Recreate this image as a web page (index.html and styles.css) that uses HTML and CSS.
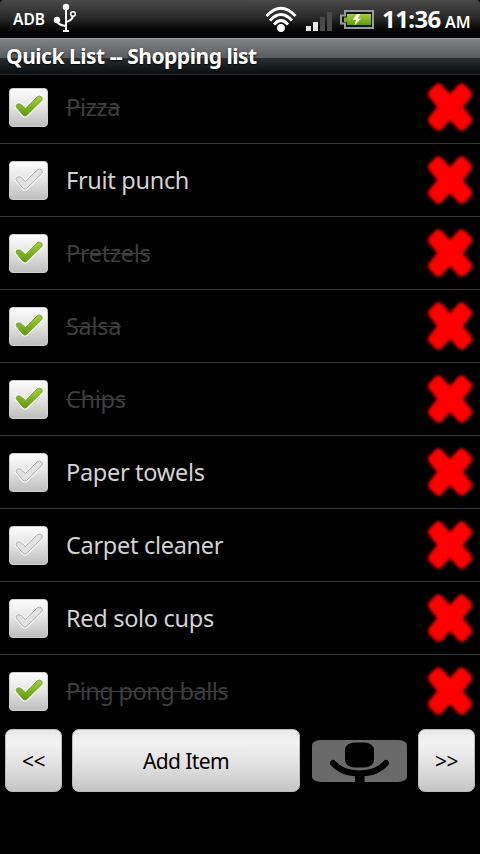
FILE: index.html
```html
<!DOCTYPE html>
<html lang="en">
  <head>
    <meta charset="UTF-8">
    <meta name="viewport" content="width=device-width, initial-scale=1">
    <title>Quick List</title>
    <link rel="stylesheet" href="styles.css">
  </head>
  <body>
    <!-- shared icons -->
    <svg class="defs" width="0" height="0">
      <defs>
        <linearGradient id="green" x1="0" y1="0" x2="0" y2="1">
          <stop offset="0" stop-color="#a3d138"/>
          <stop offset="1" stop-color="#5f9a0c"/>
        </linearGradient>
        <linearGradient id="box" x1="0" y1="0" x2="0" y2="1">
          <stop offset="0" stop-color="#fdfdfd"/>
          <stop offset="0.45" stop-color="#e6e6e6"/>
          <stop offset="1" stop-color="#bdbdbd"/>
        </linearGradient>
        <filter id="soft" filterUnits="userSpaceOnUse" x="0" y="0" width="54" height="58">
          <feGaussianBlur stdDeviation="1.5"/>
        </filter>
        <path id="tick" d="M7.600 17.300Q6.500 19.200 8.600 21.100L14.300 27.900Q16.200 29.800 18.300 28L33.500 13Q34.800 11.400 33.700 9.500Q31.500 7.300 29.200 8.800L16.700 21L12.100 16.700Q9.500 15.200 7.600 17.300Z"/>
      </defs>
      <symbol id="checked" viewBox="0 0 40 40">
        <rect x=".5" y=".5" width="39" height="39" rx="3.5" fill="url(#box)" stroke="#d2d2d2"/>
        <use href="#tick" fill="none" stroke="#f8f8f8" stroke-width="3"/>
        <use href="#tick" fill="url(#green)" stroke="#6e9f28" stroke-width=".8"/>
      </symbol>
      <symbol id="unchecked" viewBox="0 0 40 40">
        <rect x=".5" y=".5" width="39" height="39" rx="3.5" fill="url(#box)" stroke="#d2d2d2"/>
        <use href="#tick" fill="none" stroke="#f8f8f8" stroke-width="3"/>
        <use href="#tick" fill="#e2e2e2" stroke="#a8a8a8" stroke-width="1"/>
      </symbol>
      <symbol id="delete" viewBox="0 0 54 58">
        <path d="M13 6Q16 4 19 7L27 16L35 7Q38 4 41 6L48 13Q50 16 48 19L40 29L48 39Q50 42 48 45L41 52Q38 54 35 51L27 42L19 51Q16 54 13 52L6 45Q4 42 6 39L14 29L6 19Q4 16 6 13Z" fill="#f00" filter="url(#soft)"/>
      </symbol>
    </svg>

    <header class="status">
      <span class="adb">ADB</span>
      <svg class="usb" width="24" height="30" viewBox="0 0 24 30">
        <g fill="none" stroke="#fff" stroke-width="2">
          <path d="M13 4V27M4 17Q4 22 13 23M20 12Q20 17 13 19"/>
          <circle cx="20" cy="11" r="2.3" fill="#222" stroke-width="1.6"/>
          <path d="M10 28H16"/>
        </g>
        <circle cx="13" cy="4" r="3.2" fill="#fff"/>
        <circle cx="4" cy="17" r="3.2" fill="#fff"/>
      </svg>
      <svg class="wifi" width="32" height="27" viewBox="0 0 32 27">
        <g fill="none" stroke="#fff" stroke-width="2.8">
          <path d="M1.5 10Q16 -5.5 30.5 10"/>
          <path d="M5 14.5Q16 2.5 27 14.5"/>
          <path d="M9 18.5Q16 10.5 23 18.5"/>
        </g>
        <circle cx="16" cy="22" r="3.9" fill="#fff"/>
      </svg>
      <svg class="signal" width="27" height="20" viewBox="0 0 27 20">
        <path d="M0 14H5V19H0ZM7 10H12V19H7Z" fill="#e6e6e6"/>
        <path d="M14 5H19V19H14ZM21 0H26V19H21Z" fill="#4b4b4b"/>
      </svg>
      <svg class="battery" width="35" height="20" viewBox="0 0 35 20">
        <path d="M5 1H33V18H5V13.5H1V5.5H5Z" fill="#111" stroke="#9b9b9b" stroke-width="2"/>
        <path d="M7 4H31V15H7V12H4V7.5H7Z" fill="url(#green)"/>
        <path d="M17 4L12.5 10H16L14.5 15.5L21 8.5H17.5L20.5 4Z" fill="#fff"/>
      </svg>
      <span class="clock">11:36</span>
      <span class="ampm">AM</span>
    </header>

    <h1 class="title">Quick List -- Shopping list</h1>

    <main class="viewport">
      <ul class="items">
        <li class="done"><svg class="check"><use href="#checked"/></svg><span>Pizza</span><svg class="delete"><use href="#delete"/></svg></li>
        <li><svg class="check"><use href="#unchecked"/></svg><span>Fruit punch</span><svg class="delete"><use href="#delete"/></svg></li>
        <li class="done"><svg class="check"><use href="#checked"/></svg><span>Pretzels</span><svg class="delete"><use href="#delete"/></svg></li>
        <li class="done"><svg class="check"><use href="#checked"/></svg><span>Salsa</span><svg class="delete"><use href="#delete"/></svg></li>
        <li class="done"><svg class="check"><use href="#checked"/></svg><span>Chips</span><svg class="delete"><use href="#delete"/></svg></li>
        <li><svg class="check"><use href="#unchecked"/></svg><span>Paper towels</span><svg class="delete"><use href="#delete"/></svg></li>
        <li><svg class="check"><use href="#unchecked"/></svg><span>Carpet cleaner</span><svg class="delete"><use href="#delete"/></svg></li>
        <li><svg class="check"><use href="#unchecked"/></svg><span>Red solo cups</span><svg class="delete"><use href="#delete"/></svg></li>
        <li class="done long"><svg class="check"><use href="#checked"/></svg><span>Ping pong balls</span><svg class="delete"><use href="#delete"/></svg></li>
      </ul>
    </main>

    <footer class="toolbar">
      <button class="nav">&lt;&lt;</button>
      <button class="add">Add Item</button>
      <svg class="mic" width="98" height="44" viewBox="0 0 98 44">
        <filter id="micsoft"><feGaussianBlur stdDeviation=".7"/></filter>
        <g filter="url(#micsoft)">
          <rect x="1" y="1" width="95" height="42" rx="9" ry="5" fill="#6b6b6b"/>
          <rect x="34" y="3.5" width="29" height="25" rx="10" ry="7"/>
          <path d="M22 24C28 31 37 34.5 48.5 34.5C60 34.5 69 31 75 24" fill="none" stroke="#000" stroke-width="6" stroke-linecap="round"/>
          <path d="M44 35H53.500V43H44Z"/>
        </g>
      </svg>
      <button class="nav">&gt;&gt;</button>
    </footer>
  </body>
</html>
```
FILE: styles.css
```css
* {
  box-sizing: border-box;
}

body {
  margin: 0;
  width: 480px;
  height: 854px;
  overflow: hidden;
  background: #000;
  color: #fff;
  font-family: "Noto Sans", "Open Sans", sans-serif;
}

.defs {
  position: absolute;
}

.status {
  display: flex;
  align-items: center;
  height: 38px;
  padding: 0 9px 0 13px;
  background: linear-gradient(#4a4a4a, #2b2b2b 45%, #090909 75%, #000);
  border-radius: 4px 4px 0 0;
  font-weight: bold;
  line-height: 38px;
}

.adb {
  width: 32px;
  font-size: 15.5px;
  font-weight: 600;
}

.usb {
  margin-left: 8px;
  margin-top: -2px;
}

.wifi {
  margin-left: auto;
}

.signal {
  margin-left: 9px;
  margin-top: 5px;
}

.battery {
  margin-left: 7px;
  margin-top: 1px;
}

.clock {
  width: 60px;
  margin-left: 7px;
  font-size: 24px;
  letter-spacing: -0.6px;
}

.ampm {
  width: 26px;
  margin-left: 3px;
  padding-top: 5px;
  font-size: 16px;
  font-weight: 600;
}

.title {
  height: 37px;
  margin: 0;
  padding-left: 6px;
  border-top: 1px solid #999b9c;
  border-bottom: 1px solid #26292a;
  background: linear-gradient(#818385, #595c5e 19px, #2b2e30 19px, #0b0e0f);
  font-size: 21px;
  line-height: 35px;
  letter-spacing: -0.48px;
  white-space: nowrap;
  text-shadow: 0 1px 2px #000;
}

.viewport {
  height: 653px;
  overflow: hidden;
}

/* list is scrolled a few pixels under the title */
.items {
  margin: -4px 0 0;
  padding: 0;
  list-style: none;
}

.items li {
  display: flex;
  align-items: center;
  height: 73px;
  padding: 0 3px 0 9px;
  border-bottom: 1px solid #393939;
  color: #d2d2d2;
  font-size: 23.5px;
  letter-spacing: -0.3px;
}

.items li:last-child {
  border-color: transparent;
}

.items .done {
  color: #3e3e3e;
}

.items .long {
  letter-spacing: -0.55px;
}

.done span {
  text-decoration: line-through;
  text-decoration-thickness: 1px;
}

.check {
  width: 39px;
  height: 39px;
  margin-right: 18px;
}

.delete {
  width: 54px;
  height: 58px;
  margin-left: auto;
}

.toolbar {
  display: flex;
  align-items: center;
  height: 65px;
  padding: 0 5px;
}

.toolbar button {
  height: 63px;
  padding: 0;
  border: 1px solid #bcbcbc;
  border-radius: 7px;
  background: linear-gradient(#e8e8e8, #f3f3f3 20%, #e2e2e2 55%, #c5c5c5);
  color: #000;
  font-family: inherit;
  font-size: 21px;
  letter-spacing: -0.6px;
}

.toolbar .nav {
  width: 57px;
}

.toolbar .add {
  width: 228px;
  margin: 0 11px 0 10px;
}

.mic {
  margin-right: 9px;
}
```
